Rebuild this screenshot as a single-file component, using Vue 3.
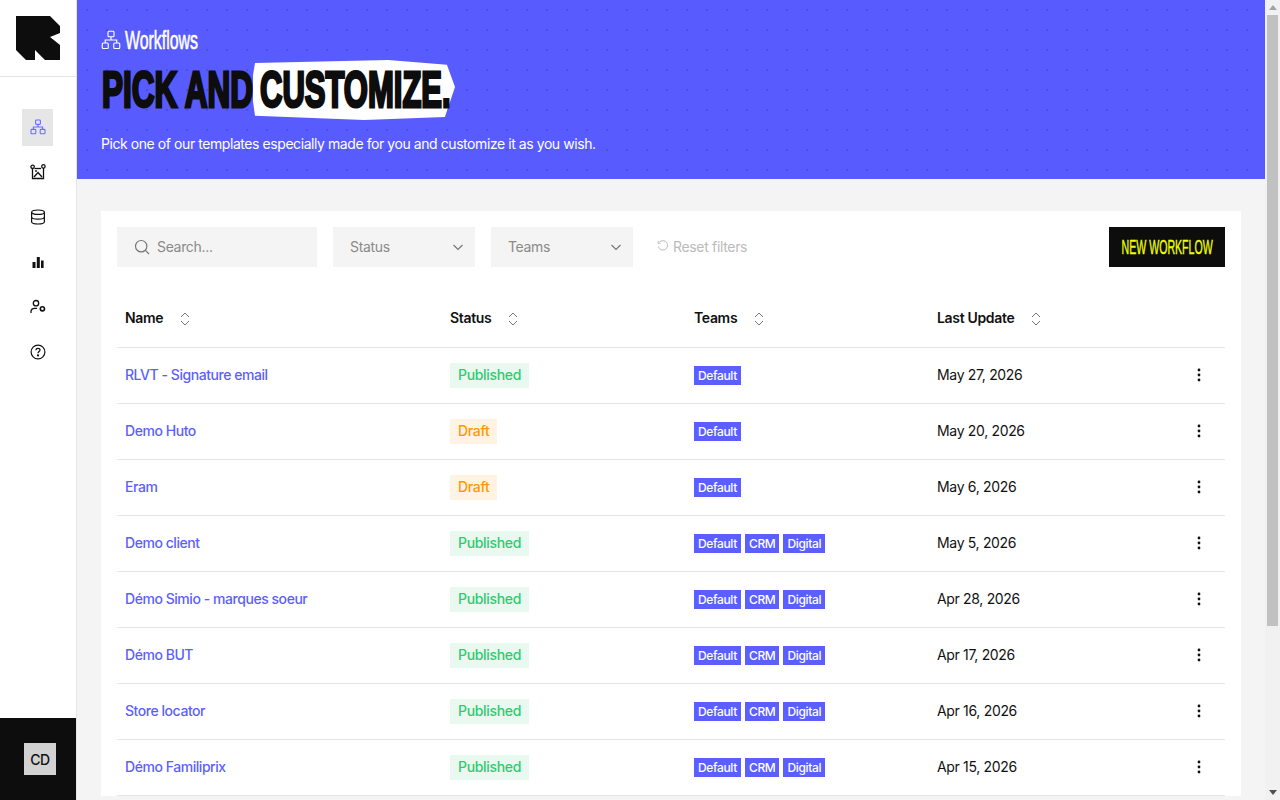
<script setup>
const workflows = [
  { name: 'RLVT - Signature email', status: 'Published', teams: ['Default'], date: 'May 27, 2026' },
  { name: 'Demo Huto', status: 'Draft', teams: ['Default'], date: 'May 20, 2026' },
  { name: 'Eram', status: 'Draft', teams: ['Default'], date: 'May 6, 2026' },
  { name: 'Demo client', status: 'Published', teams: ['Default', 'CRM', 'Digital'], date: 'May 5, 2026' },
  { name: 'Démo Simio - marques soeur', status: 'Published', teams: ['Default', 'CRM', 'Digital'], date: 'Apr 28, 2026' },
  { name: 'Démo BUT', status: 'Published', teams: ['Default', 'CRM', 'Digital'], date: 'Apr 17, 2026' },
  { name: 'Store locator', status: 'Published', teams: ['Default', 'CRM', 'Digital'], date: 'Apr 16, 2026' },
  { name: 'Démo Familiprix', status: 'Published', teams: ['Default', 'CRM', 'Digital'], date: 'Apr 15, 2026' }
]
const columns = ['Name', 'Status', 'Teams', 'Last Update']
</script>

<template>
  <div class="layout">
    <aside class="sidebar">
      <div class="logo_box">
        <svg class="logo" width="44" height="44" viewBox="0 0 44 44">
          <path d="M0 0H34L44 10V17L34 21L44 29V44H29L19 34V44H10L0 34Z" fill="#0d0d0d" />
        </svg>
      </div>
      <nav class="nav">
        <a class="nav_item active">
          <svg width="16" height="16" viewBox="0 0 16 16" fill="none" stroke="currentColor" stroke-width="1.1">
            <rect x="5.6" y="1" width="4.8" height="4.4" rx=".8" /><rect x="1" y="10.4" width="4.8" height="4.4" rx=".8" /><rect x="10.2" y="10.4" width="4.8" height="4.4" rx=".8" />
            <path d="M8 5.4V8M3.4 10.4V8H12.6V10.4" />
          </svg>
        </a>
        <a class="nav_item">
          <svg width="16" height="16" viewBox="0 0 16 16" fill="none" stroke="currentColor" stroke-width="1.3">
            <path d="M2.5 4.5V14.5H13.5V4" /><path d="M4.5 4.5H11" /><circle cx="2.6" cy="2.8" r="1.7" /><circle cx="13.4" cy="2.4" r="1.7" />
            <path d="M4 13L8 8.5L12 13" /><circle cx="6" cy="7" r=".9" fill="currentColor" stroke="none" />
          </svg>
        </a>
        <a class="nav_item">
          <svg width="16" height="16" viewBox="0 0 16 16" fill="none" stroke="currentColor" stroke-width="1.2">
            <ellipse cx="8" cy="3.2" rx="6.4" ry="2.2" /><path d="M1.6 3.2V12.8C1.6 14 4.5 15 8 15S14.4 14 14.4 12.8V3.2" /><path d="M1.6 8C1.6 9.2 4.5 10.2 8 10.2S14.4 9.2 14.4 8" />
          </svg>
        </a>
        <a class="nav_item">
          <svg width="16" height="16" viewBox="0 0 16 16" fill="currentColor">
            <rect x="2.5" y="8" width="3" height="6" /><rect x="6.8" y="3" width="3" height="11" /><rect x="11" y="6.5" width="2.6" height="7.5" />
          </svg>
        </a>
        <a class="nav_item">
          <svg width="16" height="16" viewBox="0 0 16 16" fill="none" stroke="currentColor" stroke-width="1.3">
            <circle cx="6" cy="4.2" r="2.7" /><path d="M1 14V12.6C1 10.6 2.6 9.4 4.6 9.4H7" /><circle cx="12.4" cy="9.8" r="2.1" stroke-width="1.6" />
          </svg>
        </a>
        <a class="nav_item">
          <svg width="16" height="16" viewBox="0 0 16 16" fill="none" stroke="currentColor" stroke-width="1.2">
            <circle cx="8" cy="8" r="6.9" /><path d="M6 6.2C6 5 6.9 4.3 8 4.3S10 5 10 6.1C10 7.5 8 7.6 8 9.2" /><circle cx="8" cy="11.4" r=".5" fill="currentColor" />
          </svg>
        </a>
      </nav>
      <div class="user_box">
        <div class="avatar">CD</div>
      </div>
    </aside>

    <main class="main">
      <header class="hero">
        <div class="hero_label">
          <svg width="20" height="20" viewBox="0 0 16 16" fill="none" stroke="currentColor" stroke-width=".9">
            <rect x="5.6" y="1" width="4.8" height="4.4" rx=".8" /><rect x="1" y="10.4" width="4.8" height="4.4" rx=".8" /><rect x="10.2" y="10.4" width="4.8" height="4.4" rx=".8" />
            <path d="M8 5.4V8M3.4 10.4V8H12.6V10.4" />
          </svg>
          <span class="hero_label_text">Workflows</span>
        </div>
        <h1 class="hero_title">
          <span class="hero_box first"><span class="hero_word">PICK AND</span></span>
          <span class="hero_mark"><span class="hero_box second"><span class="hero_word">CUSTOMIZE.</span></span></span>
        </h1>
        <p class="hero_text">Pick one of our templates especially made for you and customize it as you wish.</p>
      </header>

      <section class="content">
        <div class="card">
          <div class="toolbar">
            <label class="search">
              <svg width="16" height="16" viewBox="0 0 16 16" fill="none" stroke="#777" stroke-width="1.2">
                <circle cx="7.2" cy="7.2" r="5.7" /><path d="M11.4 11.4L15 15" />
              </svg>
              <input type="text" placeholder="Search..." />
            </label>
            <div class="select" v-for="label in ['Status', 'Teams']" :key="label">
              <span class="select_label">{{ label }}</span>
              <svg width="12" height="12" viewBox="0 0 12 12" fill="none" stroke="#777" stroke-width="1.2"><path d="M1.5 4L6 8.5L10.5 4" /></svg>
            </div>
            <button class="reset">
              <svg width="12" height="12" viewBox="0 0 12 12" fill="none" stroke="#bbb" stroke-width="1"><path d="M2.4 2.2A4.7 4.7 0 1 1 1.3 6.4" /><path d="M1.2 1V3.2H3.4" /></svg>
              Reset filters
            </button>
            <button class="new_button"><span class="new_label">NEW WORKFLOW</span></button>
          </div>

          <table class="table">
            <colgroup>
              <col style="width: 325px" /><col style="width: 244px" /><col style="width: 243px" /><col style="width: 240px" /><col />
            </colgroup>
            <thead>
              <tr>
                <th v-for="col in columns" :key="col">
                  <span class="th_inner">
                    {{ col }}
                    <svg width="10" height="14" viewBox="0 0 10 14" fill="none" stroke="#777" stroke-width="1"><path d="M1 5L5 1L9 5M1 9L5 13L9 9" /></svg>
                  </span>
                </th>
                <th></th>
              </tr>
            </thead>
            <tbody>
              <tr v-for="item in workflows" :key="item.name">
                <td class="text_cell"><a class="name_link">{{ item.name }}</a></td>
                <td><span class="status" :class="item.status === 'Draft' ? 'draft' : 'published'">{{ item.status }}</span></td>
                <td>
                  <div class="tags">
                    <span class="tag" v-for="team in item.teams" :key="team">{{ team }}</span>
                  </div>
                </td>
                <td class="text_cell">{{ item.date }}</td>
                <td class="actions">
                  <svg width="4" height="14" viewBox="0 0 4 14" fill="#111"><circle cx="2" cy="2" r="1.4" /><circle cx="2" cy="7" r="1.4" /><circle cx="2" cy="12" r="1.4" /></svg>
                </td>
              </tr>
            </tbody>
          </table>
        </div>
      </section>
    </main>

    <!-- la capture ne montre pas la vraie barre, on la dessine -->
    <div class="scrollbar">
      <span class="arrow up"></span>
      <span class="thumb"></span>
      <span class="arrow down"></span>
    </div>
  </div>
</template>

<style scoped>
.layout {
  display: flex;
  height: 100vh;
  overflow: hidden;
  font-family: Inter, "Liberation Sans", sans-serif;
  color: #111;
  font-size: 14px;
  letter-spacing: -0.33px;
}
.sidebar {
  flex: 0 0 77px;
  box-sizing: border-box;
  display: flex;
  flex-direction: column;
  background: #fff;
  border-right: 1px solid #e6e6e6;
}
.logo_box {
  height: 77px;
  box-sizing: border-box;
  padding: 16px;
  border-bottom: 1px solid #e6e6e6;
}
.logo {
  display: block;
}
.nav {
  display: flex;
  flex-direction: column;
  gap: 8px;
  padding: 32px 0 0 22px;
}
.nav_item {
  width: 31px;
  height: 37px;
  box-sizing: border-box;
  padding-bottom: 2px;
  display: flex;
  align-items: center;
  justify-content: center;
  color: #111;
}
.nav_item.active {
  background: #e6e6e6;
  color: #6a6dff;
}
.user_box {
  margin-top: auto;
  height: 82px;
  box-sizing: border-box;
  padding-left: 24px;
  display: flex;
  align-items: center;
  background: #0d0d0d;
}
.avatar {
  width: 32px;
  height: 32px;
  display: flex;
  align-items: center;
  justify-content: center;
  background: #d2d2d2;
  color: #111;
  font-weight: 500;
}
.main {
  flex: 1;
  min-width: 0;
  background: #f4f4f4;
}
.hero {
  height: 179px;
  box-sizing: border-box;
  padding: 27px 24px 0;
  background-color: #585cff;
  background-image: radial-gradient(circle, #4a4ee4 1px, transparent 1.1px);
  background-size: 20px 20px;
  color: #fff;
}
.hero_label {
  display: flex;
  align-items: center;
  gap: 4px;
  height: 26px;
}
.hero_label_text {
  font-family: "Liberation Sans", sans-serif;
  font-size: 25px;
  letter-spacing: 0;
  display: inline-block;
  -webkit-text-stroke: .6px #fff;
  transform: scaleX(.635);
  transform-origin: left center;
}
.hero_title {
  display: flex;
  align-items: center;
  margin: 7px 0 0;
  height: 60px;
  color: #0d0d0d;
  font-family: "Liberation Sans", sans-serif;
  font-weight: 700;
  font-size: 50px;
  line-height: 60px;
  letter-spacing: 0;
}
.hero_box {
  display: block;
  height: 60px;
}
.hero_box.first {
  width: 150px;
}
.hero_box.second {
  width: 190px;
}
.hero_word {
  display: inline-block;
  -webkit-text-stroke: 3px #0d0d0d;
  white-space: nowrap;
  transform-origin: left center;
  margin-left: 1px;
}
.first .hero_word {
  transform: scaleX(.63);
}
.second .hero_word {
  transform: scaleX(.62);
}
.hero_mark {
  position: relative;
  margin-left: 2px;
  padding: 0 6px;
}
.hero_mark::before {
  content: "";
  position: absolute;
  inset: 0;
  background: #fff;
  clip-path: polygon(1% 5%, 67% 0, 96% 8%, 100% 45%, 95% 95%, 55% 100%, 1% 93%, -1% 45%);
}
.hero_mark .hero_box {
  position: relative;
}
.hero_text {
  margin: 14px 0 0;
  font-size: 14px;
  line-height: 20px;
  letter-spacing: -0.43px;
}
.content {
  padding: 32px 24px 0;
}
.card {
  background: #fff;
  padding: 16px 16px 0;
}
.toolbar {
  display: flex;
  align-items: center;
  gap: 16px;
  height: 40px;
}
.search {
  width: 200px;
  height: 40px;
  box-sizing: border-box;
  display: flex;
  align-items: center;
  gap: 7px;
  padding-left: 17px;
  background: #f4f4f4;
}
.search input {
  flex: 1;
  min-width: 0;
  border: 0;
  outline: 0;
  padding: 0 0 2px;
  background: transparent;
  font: inherit;
  letter-spacing: inherit;
}
.search input::placeholder {
  color: #8a8a8a;
}
.select {
  width: 142px;
  height: 40px;
  box-sizing: border-box;
  display: flex;
  align-items: center;
  justify-content: space-between;
  padding: 0 11px 0 17px;
  background: #f4f4f4;
  color: #8a8a8a;
}
.select_label {
  padding-bottom: 2px;
}
.reset {
  display: flex;
  align-items: center;
  gap: 4px;
  margin-left: 8px;
  padding: 0 0 2px;
  border: 0;
  background: none;
  color: #bbb;
  font: inherit;
  letter-spacing: inherit;
}
.new_button {
  margin-left: auto;
  width: 116px;
  height: 40px;
  padding: 0;
  border: 0;
  background: #0d0d0d;
  display: flex;
  align-items: center;
  justify-content: center;
  overflow: hidden;
}
.new_label {
  flex: none;
  color: #f0ff00;
  font-family: "Liberation Sans", sans-serif;
  font-size: 20px;
  letter-spacing: 0;
  white-space: nowrap;
  -webkit-text-stroke: .4px #f0ff00;
  transform: scaleX(.53);
}
.table {
  width: 100%;
  table-layout: fixed;
  border-collapse: collapse;
}
.table th {
  height: 80px;
  padding: 22px 8px 0;
  box-sizing: border-box;
  text-align: left;
  font-weight: 600;
  border-bottom: 1px solid #e6e6e6;
}
.th_inner {
  display: inline-flex;
  align-items: center;
  gap: 17px;
}
.th_inner svg {
  margin-top: 2px;
}
.table td {
  height: 56px;
  padding: 0 8px;
  box-sizing: border-box;
  border-bottom: 1px solid #e6e6e6;
}
.table td.text_cell {
  padding-bottom: 2px;
}
.name_link {
  color: #5b5fff;
  font-weight: 500;
  letter-spacing: -0.45px;
}
.status {
  display: inline-block;
  padding: 0 8px 1px;
  line-height: 24px;
  font-weight: 500;
}
.published {
  background: #e9f9f0;
  color: #2ecc71;
}
.draft {
  background: #fff3e3;
  color: #ff9800;
}
.tags {
  display: flex;
  gap: 4px;
}
.tag {
  padding: 0 4px;
  line-height: 19px;
  background: #5b5fff;
  color: #fff;
  font-size: 12px;
  font-weight: 500;
  letter-spacing: -0.35px;
}
.table td.actions {
  text-align: right;
  padding: 0 24px 3px 8px;
}
.actions svg {
  display: inline-block;
  vertical-align: middle;
}
.scrollbar {
  flex: 0 0 15px;
  display: flex;
  flex-direction: column;
  align-items: center;
  background: #f1f1f1;
}
.arrow {
  flex: none;
  width: 0;
  height: 0;
  border-left: 4px solid transparent;
  border-right: 4px solid transparent;
}
.arrow.up {
  margin: 5px 0;
  border-bottom: 5px solid #a3a3a3;
}
.arrow.down {
  margin: auto 0 5px;
  border-top: 5px solid #505050;
}
.thumb {
  flex: none;
  width: 11px;
  height: 611px;
  background: #c1c1c1;
}
</style>

<style>
html, body {
  margin: 0;
  background: #f4f4f4;
}
</style>
